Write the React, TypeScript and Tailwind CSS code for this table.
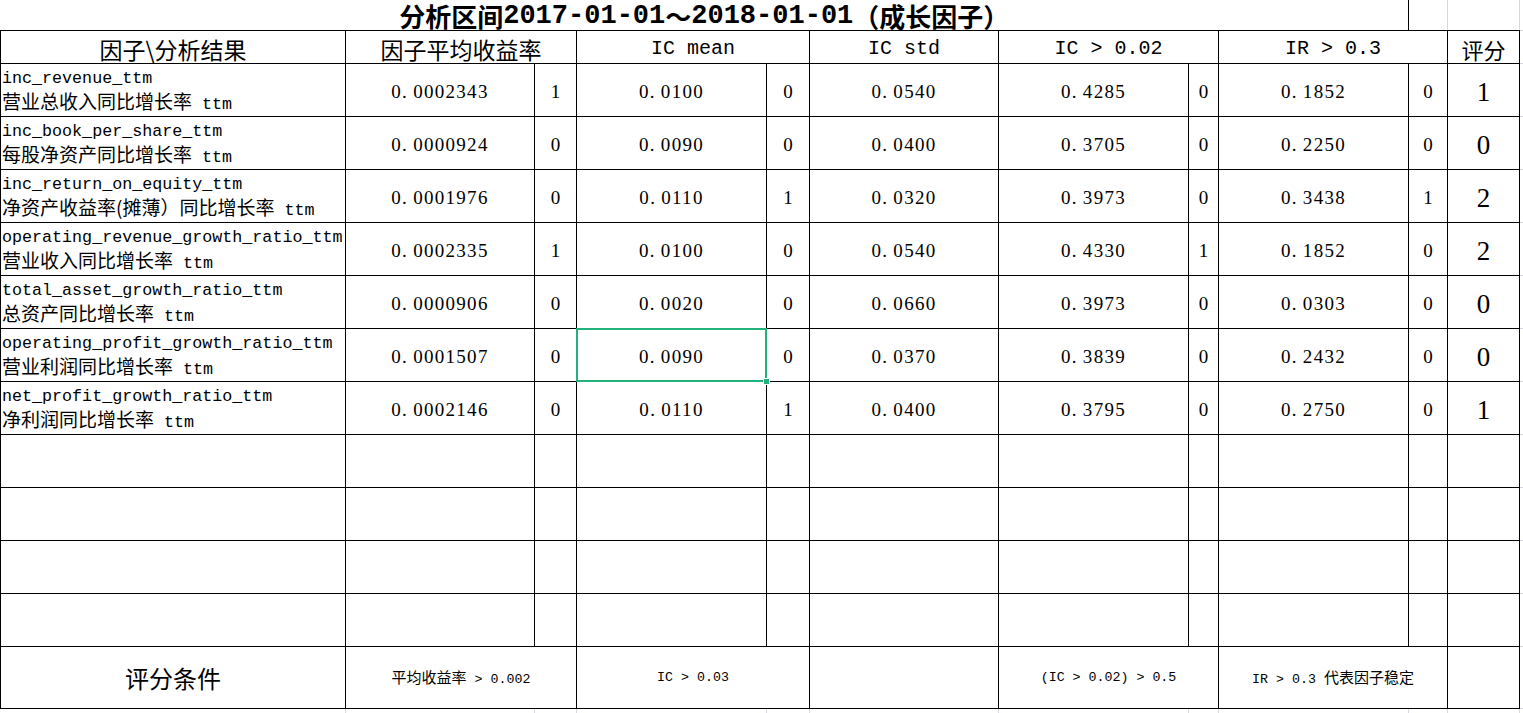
import React from "react";

type Row = {
  en: string;
  cn: string;
  ret: string;
  retS: number;
  icm: string;
  icmS: number;
  ics: string;
  ic2: string;
  ic2S: number;
  ir: string;
  irS: number;
  score: number;
};

const rows: Row[] = [
  { en: "inc_revenue_ttm", cn: "营业总收入同比增长率", ret: "0.0002343", retS: 1, icm: "0.0100", icmS: 0, ics: "0.0540", ic2: "0.4285", ic2S: 0, ir: "0.1852", irS: 0, score: 1 },
  { en: "inc_book_per_share_ttm", cn: "每股净资产同比增长率", ret: "0.0000924", retS: 0, icm: "0.0090", icmS: 0, ics: "0.0400", ic2: "0.3705", ic2S: 0, ir: "0.2250", irS: 0, score: 0 },
  { en: "inc_return_on_equity_ttm", cn: "净资产收益率(摊薄）同比增长率", ret: "0.0001976", retS: 0, icm: "0.0110", icmS: 1, ics: "0.0320", ic2: "0.3973", ic2S: 0, ir: "0.3438", irS: 1, score: 2 },
  { en: "operating_revenue_growth_ratio_ttm", cn: "营业收入同比增长率", ret: "0.0002335", retS: 1, icm: "0.0100", icmS: 0, ics: "0.0540", ic2: "0.4330", ic2S: 1, ir: "0.1852", irS: 0, score: 2 },
  { en: "total_asset_growth_ratio_ttm", cn: "总资产同比增长率", ret: "0.0000906", retS: 0, icm: "0.0020", icmS: 0, ics: "0.0660", ic2: "0.3973", ic2S: 0, ir: "0.0303", irS: 0, score: 0 },
  { en: "operating_profit_growth_ratio_ttm", cn: "营业利润同比增长率", ret: "0.0001507", retS: 0, icm: "0.0090", icmS: 0, ics: "0.0370", ic2: "0.3839", ic2S: 0, ir: "0.2432", irS: 0, score: 0 },
  { en: "net_profit_growth_ratio_ttm", cn: "净利润同比增长率", ret: "0.0002146", retS: 0, icm: "0.0110", icmS: 1, ics: "0.0400", ic2: "0.3795", ic2S: 0, ir: "0.2750", irS: 0, score: 1 },
];

const mono = "font-['Liberation_Mono','Noto_Sans_CJK_SC',monospace]";
const cjk = "font-['Noto_Sans_CJK_SC',sans-serif]";
const serif = "font-['Liberation_Serif','Noto_Sans_CJK_SC',serif]";

const cell = "border border-black align-middle p-0";
const grid = "border-[#d5d8e0]";

// number like 0.0002343, period gets extra room the way the sheet font draws it
const Num = ({ v }: { v: string }) => {
  const [a, b] = v.split(".");
  return (
    <span className={`${serif} text-[19px] tracking-[1.3px]`}>
      {a}.<span className="ml-[5px]">{b}</span>
    </span>
  );
};

const Flag = ({ v }: { v: number }) => (
  <span className={`${serif} text-[19px]`}>{v}</span>
);

export default function App() {
  return (
    <div className="w-[1523px] h-[713px] overflow-hidden bg-white text-black">
      <table className="table-fixed border-collapse w-[1523px]">
        <colgroup>
          <col className="w-[345px]" />
          <col className="w-[189px]" />
          <col className="w-[42px]" />
          <col className="w-[190px]" />
          <col className="w-[43px]" />
          <col className="w-[189px]" />
          <col className="w-[190px]" />
          <col className="w-[30px]" />
          <col className="w-[190px]" />
          <col className="w-[39px]" />
          <col className="w-[72px]" />
          <col className="w-[4px]" />
        </colgroup>
        <tbody>
          {/* title */}
          <tr>
            <td colSpan={9} className="p-0 border-b border-r border-black">
              <div className={`h-[30px] pt-[2px] flex items-center justify-center whitespace-nowrap ${cjk} font-bold text-[26px] leading-none`}>
                <span>分析区间</span>
                <span className={`${mono} text-[27px]`}>2017-01-01</span>
                <span>～</span>
                <span className={`${mono} text-[27px]`}>2018-01-01</span>
                <span>（成长因子）</span>
              </div>
            </td>
            <td className={`p-0 border-b border-b-black border-r ${grid}`}></td>
            <td className={`p-0 border-b border-b-black border-r ${grid}`}></td>
            <td className={`p-0 border-b ${grid}`}></td>
          </tr>

          {/* header */}
          <tr>
            <td className={`${cell} h-[33px] text-center pt-[3px] ${cjk} text-[23px] leading-[28px]`}>因子\分析结果</td>
            <td colSpan={2} className={`${cell} text-center pt-[3px] ${cjk} text-[23px] leading-[28px]`}>因子平均收益率</td>
            <td colSpan={2} className={`${cell} text-center pt-[3px] ${mono} text-[20px] leading-[28px]`}>IC mean</td>
            <td className={`${cell} text-center pt-[3px] ${mono} text-[20px] leading-[28px]`}>IC std</td>
            <td colSpan={2} className={`${cell} text-center pt-[3px] ${mono} text-[20px] leading-[28px]`}>IC &gt; 0.02</td>
            <td colSpan={2} className={`${cell} text-center pt-[3px] ${mono} text-[20px] leading-[28px]`}>IR &gt; 0.3</td>
            <td className={`${cell} text-center pt-[3px] ${cjk} text-[22px] leading-[28px]`}>评分</td>
            <td className={`p-0 border-b ${grid}`}></td>
          </tr>

          {/* data rows */}
          {rows.map((r, i) => (
            <tr key={r.en}>
              <td className={`${cell} h-[53px] text-left pl-px`}>
                <div className={`h-[22px] leading-[22px] ${mono} text-[16.7px] whitespace-nowrap`}>{r.en}</div>
                <div className="h-[22px] leading-[22px] whitespace-nowrap flex items-baseline">
                  <span className={`${cjk} text-[19px] leading-[22px]`}>{r.cn}</span>
                  <span className={`${mono} text-[16.7px] leading-[22px] whitespace-pre`}> ttm</span>
                </div>
              </td>
              <td className={`${cell} text-center pt-[5px]`}><Num v={r.ret} /></td>
              <td className={`${cell} text-center pt-[5px]`}><Flag v={r.retS} /></td>
              <td className={`${cell} text-center pt-[5px] relative`}>
                <Num v={r.icm} />
                {i === 5 && (
                  <>
                    <div className="absolute -inset-px border-2 border-[#21b27c] pointer-events-none" />
                    <div className="absolute -right-[4px] -bottom-[4px] w-[7px] h-[7px] bg-[#21b27c] border border-white" />
                  </>
                )}
              </td>
              <td className={`${cell} text-center pt-[5px]`}><Flag v={r.icmS} /></td>
              <td className={`${cell} text-center pt-[5px]`}><Num v={r.ics} /></td>
              <td className={`${cell} text-center pt-[5px]`}><Num v={r.ic2} /></td>
              <td className={`${cell} text-center pt-[5px]`}><Flag v={r.ic2S} /></td>
              <td className={`${cell} text-center pt-[5px]`}><Num v={r.ir} /></td>
              <td className={`${cell} text-center pt-[5px]`}><Flag v={r.irS} /></td>
              <td className={`${cell} text-center pt-[5px]`}>
                <span className={`${serif} text-[27px]`}>{r.score}</span>
              </td>
              <td className={`p-0 border-b ${grid}`}></td>
            </tr>
          ))}

          {/* empty rows */}
          {[0, 1, 2, 3].map((k) => (
            <tr key={k}>
              <td className={`${cell} h-[53px]`}></td>
              <td className={cell}></td>
              <td className={cell}></td>
              <td className={cell}></td>
              <td className={cell}></td>
              <td className={cell}></td>
              <td className={cell}></td>
              <td className={cell}></td>
              <td className={cell}></td>
              <td className={cell}></td>
              <td className={cell}></td>
              <td className={`p-0 border-b ${grid}`}></td>
            </tr>
          ))}

          {/* scoring conditions */}
          <tr>
            <td className={`${cell} h-[62px] text-center ${cjk} text-[24px]`}>评分条件</td>
            <td colSpan={2} className={`${cell} text-center`}>
              <span className={`${cjk} text-[15px]`}>平均收益率</span>
              <span className={`${mono} text-[13.3px]`}> &gt; 0.002</span>
            </td>
            <td colSpan={2} className={`${cell} text-center ${mono} text-[13.3px]`}>IC &gt; 0.03</td>
            <td className={cell}></td>
            <td colSpan={2} className={`${cell} text-center ${mono} text-[13.3px]`}>(IC &gt; 0.02) &gt; 0.5</td>
            <td colSpan={2} className={`${cell} text-center`}>
              <span className={`${mono} text-[13.3px]`}>IR &gt; 0.3 </span>
              <span className={`${cjk} text-[15px]`}>代表因子稳定</span>
            </td>
            <td className={cell}></td>
            <td className={`p-0 border-b ${grid}`}></td>
          </tr>

          {/* sheet gridlines below */}
          <tr>
            {[0, 1, 2, 3, 4, 5, 6, 7, 8, 9, 10].map((k) => (
              <td key={k} className={`h-[6px] p-0 border-r ${grid}`}></td>
            ))}
            <td className="p-0"></td>
          </tr>
        </tbody>
      </table>
    </div>
  );
}
